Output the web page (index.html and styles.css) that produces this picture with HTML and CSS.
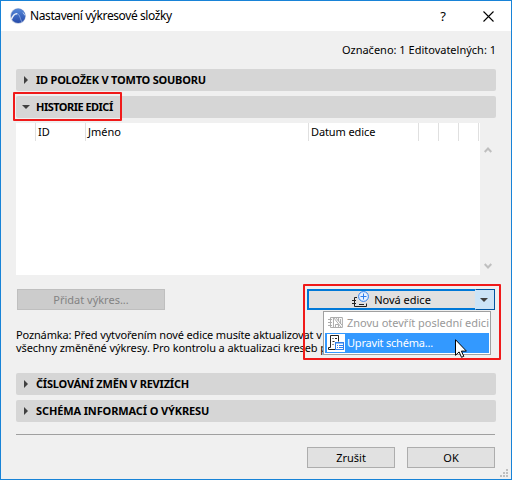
FILE: index.html
```html
<!DOCTYPE html>
<html lang="cs">

<head>
    <meta charset="UTF-8">
    <title>Nastavení výkresové složky</title>
    <link rel="stylesheet" href="styles.css">
</head>

<body>
    <div class="dialog">
        <div class="titlebar">
            <svg class="logo" width="16" height="16" viewBox="0 0 16 16">
                <defs>
                    <linearGradient id="blue" x1="0" y1="0" x2="0" y2="1">
                        <stop offset="0" stop-color="#5688d8" />
                        <stop offset="1" stop-color="#264baa" />
                    </linearGradient>
                </defs>
                <circle cx="8" cy="8" r="7.8" fill="#b9c4da" />
                <circle cx="8.200" cy="7.800" r="7.200" fill="url(#blue)" />
                <path d="M1.300 11.500C3 7.200 5 5.300 7.300 5.800" fill="none" stroke="#e8eef8" stroke-width="1.500" />
                <path d="M7.300 5.800c2.700.8 3 5.500 4.700 8.700" fill="none" stroke="#9db8e6" stroke-width=".7" />
                <path d="M13 4.500l2 3" stroke="#dfe8f6" stroke-width=".8" />
            </svg>
            <span class="title">Nastavení výkresové složky</span>
            <span class="help">?</span>
            <svg class="close" width="11" height="11" viewBox="0 0 11 11">
                <path d="M.5.5l10 10M10.500.5l-10 10" stroke="#000" stroke-width="1.1" />
            </svg>
        </div>

        <div class="content">
            <div class="status">Označeno: 1 Editovatelných: 1</div>

            <div class="section"><i class="arrow right"></i><span class="w-id">ID POLOŽEK V TOMTO SOUBORU</span></div>
            <div class="section"><i class="arrow down"></i><span class="w-history">HISTORIE EDICÍ</span><div class="mark mark-section"></div></div>

            <div class="table">
                <div class="list">
                    <div class="row">
                        <span></span>
                        <span>ID</span>
                        <span>Jméno</span>
                        <span class="w-date">Datum edice</span>
                        <span></span>
                        <span></span>
                        <span></span>
                    </div>
                </div>
                <div class="scroll">
                    <svg width="8" height="6" viewBox="0 0 8 6"><path d="M.7 5L4 1.500 7.300 5" /></svg>
                    <svg width="8" height="6" viewBox="0 0 8 6"><path d="M.7 1L4 4.500 7.300 1" /></svg>
                </div>
            </div>

            <div class="actions">
                <button class="btn disabled">Přidat výkres...</button>
                <div class="split">
                    <button class="split-main">
                        <svg width="19" height="17" viewBox="0 0 19 17" fill="none">
                            <path d="M6 6.500H3.500v9h12v-3M1 9.500h4M1 12.500h4" stroke="#222" />
                            <path d="M8 13.500h5" stroke="#222" />
                            <circle cx="12.500" cy="5.500" r="4.900" fill="#e8f1ff" stroke="#2f80ed" />
                            <path d="M12.500 2.500v6M9.500 5.500h6" stroke="#2f80ed" />
                        </svg>
                        <span>Nová edice</span>
                    </button>
                    <button class="split-drop"><i class="arrow down"></i></button>
                    <div class="menu">
                        <div class="item off">
                            <svg width="17" height="14" viewBox="0 0 17 14" fill="none" stroke="#aaa">
                                <path d="M3.500 1.500h12v10h-12zM1 3.500h4M1 6.500h4M1 9.500h4M6.500 2v9M7 2l7 9M9 2l6 7M11.500 5V2M13.500 8V3M8.500 11V8.500h3V11" />
                            </svg>
                            <span>Znovu otevřít poslední edici</span>
                        </div>
                        <div class="item selected">
                            <svg width="18" height="18" viewBox="0 0 18 18" fill="none">
                                <rect width="18" height="18" fill="#fff" />
                                <path d="M8 15.500H1.500v-2h2v-12h8v6" stroke="#222" />
                                <path d="M5.500 4.500h1M8 4.500h2M5.500 7.500h2M5.500 10.500h1" stroke="#222" />
                                <rect x="8.500" y="8.500" width="8" height="7" fill="#fff" stroke="#2f80ed" />
                                <path d="M8 9h9M10 11.500h1M12 11.500h4M10 13.500h1M12 13.500h4" stroke="#2f80ed" />
                            </svg>
                            <span class="w-edit">Upravit schéma...</span>
                        </div>
                    </div>
                    <div class="mark mark-split"></div>
                    <svg class="cursor" width="12" height="19" viewBox="0 0 12 19">
                        <path d="M.5.7v15.600l3.600-3.400 2.400 5.400 2.300-1-2.400-5.200h5Z" fill="#fff" stroke="#000" />
                    </svg>
                </div>
            </div>

            <p class="note">
                <span class="note-1">Poznámka: Před vytvořením nové edice musíte aktualizovat v</span><br>
                <span class="note-2">všechny změněné výkresy. Pro kontrolu a aktualizaci kreseb p</span>
            </p>

            <div class="section"><i class="arrow right"></i><span class="w-rev">ČÍSLOVÁNÍ ZMĚN V REVIZÍCH</span></div>
            <div class="section"><i class="arrow right"></i><span class="w-schema">SCHÉMA INFORMACÍ O VÝKRESU</span></div>

            <div class="footer">
                <button class="btn">Zrušit</button>
                <button class="btn">OK</button>
            </div>
        </div>
        <svg class="grip" width="8" height="8" viewBox="0 0 8 8" fill="#bfbfbf">
            <path d="M6 0h2v2H6zM3 3h2v2H3zM6 3h2v2H6zM0 6h2v2H0zM3 6h2v2H3zM6 6h2v2H6z" />
        </svg>
    </div>
</body>

</html>
```
FILE: styles.css
```css
* {
    box-sizing: border-box;
}

body {
    margin: 0;
    font-family: "Noto Sans", "Open Sans", sans-serif;
    font-size: 11px;
    line-height: 14px;
    color: #000;
}

button {
    font: inherit;
    color: inherit;
    padding: 0;
    border-radius: 0;
}

span,
.status {
    white-space: nowrap;
}

.dialog {
    position: relative;
    width: 512px;
    height: 480px;
    border: 1px solid #1883d7;
    background: #f0f0f0;
    overflow: hidden;
}

.titlebar {
    display: flex;
    align-items: center;
    height: 30px;
    padding: 0 17px 0 9px;
    background: #fff;
}

.logo {
    margin-right: 4px;
}

.title {
    font-size: 12px;
    letter-spacing: -0.4px;
}

.help {
    margin-left: auto;
    margin-right: 37px;
    font-size: 13px;
}

.content {
    padding: 0 15px;
}

.status {
    height: 38px;
    padding-top: 12px;
    text-align: right;
}

.section {
    position: relative;
    display: flex;
    align-items: center;
    height: 22px;
    margin-bottom: 5px;
    border-radius: 2px;
    background: #d6d6d6;
    font-weight: bold;
}

.section .arrow {
    margin-left: 8px;
}

.section .arrow.down {
    margin-left: 6px;
    margin-right: 2px;
}

.section span {
    margin-left: 4px;
}

.w-id {
    letter-spacing: -0.22px;
}

.w-history {
    letter-spacing: -0.52px;
}

.w-rev {
    letter-spacing: -0.2px;
}

.w-schema {
    letter-spacing: -0.12px;
}

.w-date {
    letter-spacing: -0.1px;
}

.w-edit {
    letter-spacing: -0.2px;
}

.arrow {
    width: 0;
    height: 0;
    border: 4px solid transparent;
}

.arrow.right {
    border-left-color: #404040;
    border-right-width: 0;
    margin-right: 4px;
}

.arrow.down {
    border-top-color: #404040;
    border-bottom-width: 0;
}

.mark {
    position: absolute;
    border: 2px solid #f01a1a;
    border-radius: 1px;
}

.mark-section {
    left: -3px;
    top: -4px;
    width: 109px;
    height: 29px;
}

.table {
    display: flex;
    height: 152px;
}

.list {
    width: 464px;
    background: #fff;
}

.row {
    display: grid;
    grid-template-columns: 20px 50px 223px 110px 20px 20px 20px;
    width: 463px;
    height: 18px;
    line-height: 18px;
}

.row span {
    padding-left: 2px;
    border-right: 1px solid #e0e0e0;
}

.scroll {
    display: flex;
    flex-direction: column;
    justify-content: space-between;
    width: 16px;
    padding: 24px 0 6px 4px;
}

.scroll path {
    fill: none;
    stroke: #bfbfbf;
    stroke-width: 2;
}

.actions {
    display: flex;
    justify-content: space-between;
    margin: 14px 1px 0;
}

.btn {
    width: 88px;
    height: 21px;
    border: 1px solid #adadad;
    background: #e1e1e1;
}

.btn.disabled {
    width: 148px;
    border-color: #bfbfbf;
    background: #ccc;
    color: #838383;
}

.split {
    position: relative;
    display: flex;
    width: 188px;
    height: 21px;
}

.split-main {
    display: flex;
    align-items: center;
    justify-content: center;
    gap: 4px;
    width: 168px;
    padding-right: 2px;
    border: 2px solid #0078d7;
    border-right: 0;
    background: #e1e1e1;
}

.split-drop {
    display: flex;
    align-items: center;
    justify-content: center;
    width: 20px;
    padding-right: 2px;
    border: 1px solid #0054a0;
    border-left-color: #cce4f7;
    background: #cce4f7;
}

.menu {
    position: absolute;
    z-index: 1;
    left: 16px;
    top: 22px;
    width: 168px;
    height: 44px;
    padding: 1px;
    border: 1px solid #a0a0a0;
    background: #fff;
}

.item {
    display: flex;
    align-items: center;
    gap: 3px;
    height: 20px;
    padding-left: 2px;
}

.item.off {
    color: #999;
}

.item.selected {
    gap: 2px;
    background: #3399ff;
    color: #fff;
}

.mark-split {
    z-index: 2;
    left: -4px;
    top: -5px;
    width: 198px;
    height: 76px;
}

.cursor {
    position: absolute;
    z-index: 3;
    left: 148px;
    top: 50px;
}

.note {
    margin: 18px 0 19px;
    line-height: 13px;
}

.note-1 {
    letter-spacing: -0.14px;
}

.note-2 {
    letter-spacing: -0.09px;
}

.footer {
    display: flex;
    justify-content: flex-end;
    gap: 12px;
    margin: 12px 1px 0 0;
    padding-top: 12px;
    border-top: 1px solid #a0a0a0;
}

.grip {
    position: absolute;
    right: 3px;
    bottom: 2px;
}
```
